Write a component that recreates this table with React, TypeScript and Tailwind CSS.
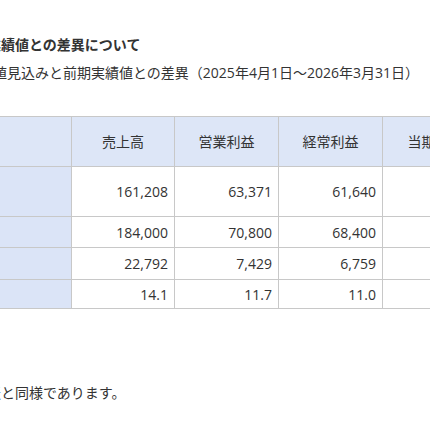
import React from 'react'

const cols = ["売上高", "営業利益", "経常利益", "当期純利益"]

const rows = [
    { h: "h-[50px]", v: ["161,208", "63,371", "61,640", "41,025"] },
    { h: "h-[31px]", v: ["184,000", "70,800", "68,400", "46,000"] },
    { h: "h-[32px]", v: ["22,792", "7,429", "6,759", "4,975"] },
    { h: "h-[29px]", v: ["14.1", "11.7", "11.0", "12.1"] },
]

function App() {
    return (
        <div className="w-[430px] h-[430px] overflow-hidden bg-white text-[#333]" style={{ fontFamily: '"Open Sans", "Noto Sans CJK JP", sans-serif' }}>
            <div className="pt-[33px]">
                <h3 className="ml-[-13px] text-[14px] font-bold leading-[24px] whitespace-nowrap">業績値との差異について</h3>
                <p className="ml-[-63px] mt-[4px] text-[14px] leading-[24px] whitespace-nowrap">業績予想値見込みと前期実績値との差異（2025年4月1日～2026年3月31日）</p>

                <table className="ml-[-40px] mt-[31px] border-collapse table-fixed text-[14px] w-[542px]">
                    <colgroup>
                        <col className="w-[111px]" />
                        <col className="w-[103px]" />
                        <col className="w-[104px]" />
                        <col className="w-[104px]" />
                        <col className="w-[120px]" />
                    </colgroup>
                    <thead>
                        <tr className="h-[50px] bg-[#dde6f7]">
                            <th className="border border-[#c8c8c8] font-normal"></th>
                            {cols.map((c) => (
                                <th key={c} className="border border-[#c8c8c8] font-normal text-center whitespace-nowrap">{c}</th>
                            ))}
                        </tr>
                    </thead>
                    <tbody>
                        {rows.map((r, i) => (
                            <tr key={i} className={r.h}>
                                <td className="border border-[#c8c8c8] bg-[#dbe4f7]"></td>
                                {r.v.map((v, j) => (
                                    <td key={j} className="border border-[#c8c8c8] text-right pr-[6px] whitespace-nowrap">{v}</td>
                                ))}
                            </tr>
                        ))}
                    </tbody>
                </table>

                <p className="ml-[-55px] mt-[72px] text-[14px] leading-[24px] whitespace-nowrap">前回発表と同様であります。</p>
            </div>
        </div>
    )
}

export default App
